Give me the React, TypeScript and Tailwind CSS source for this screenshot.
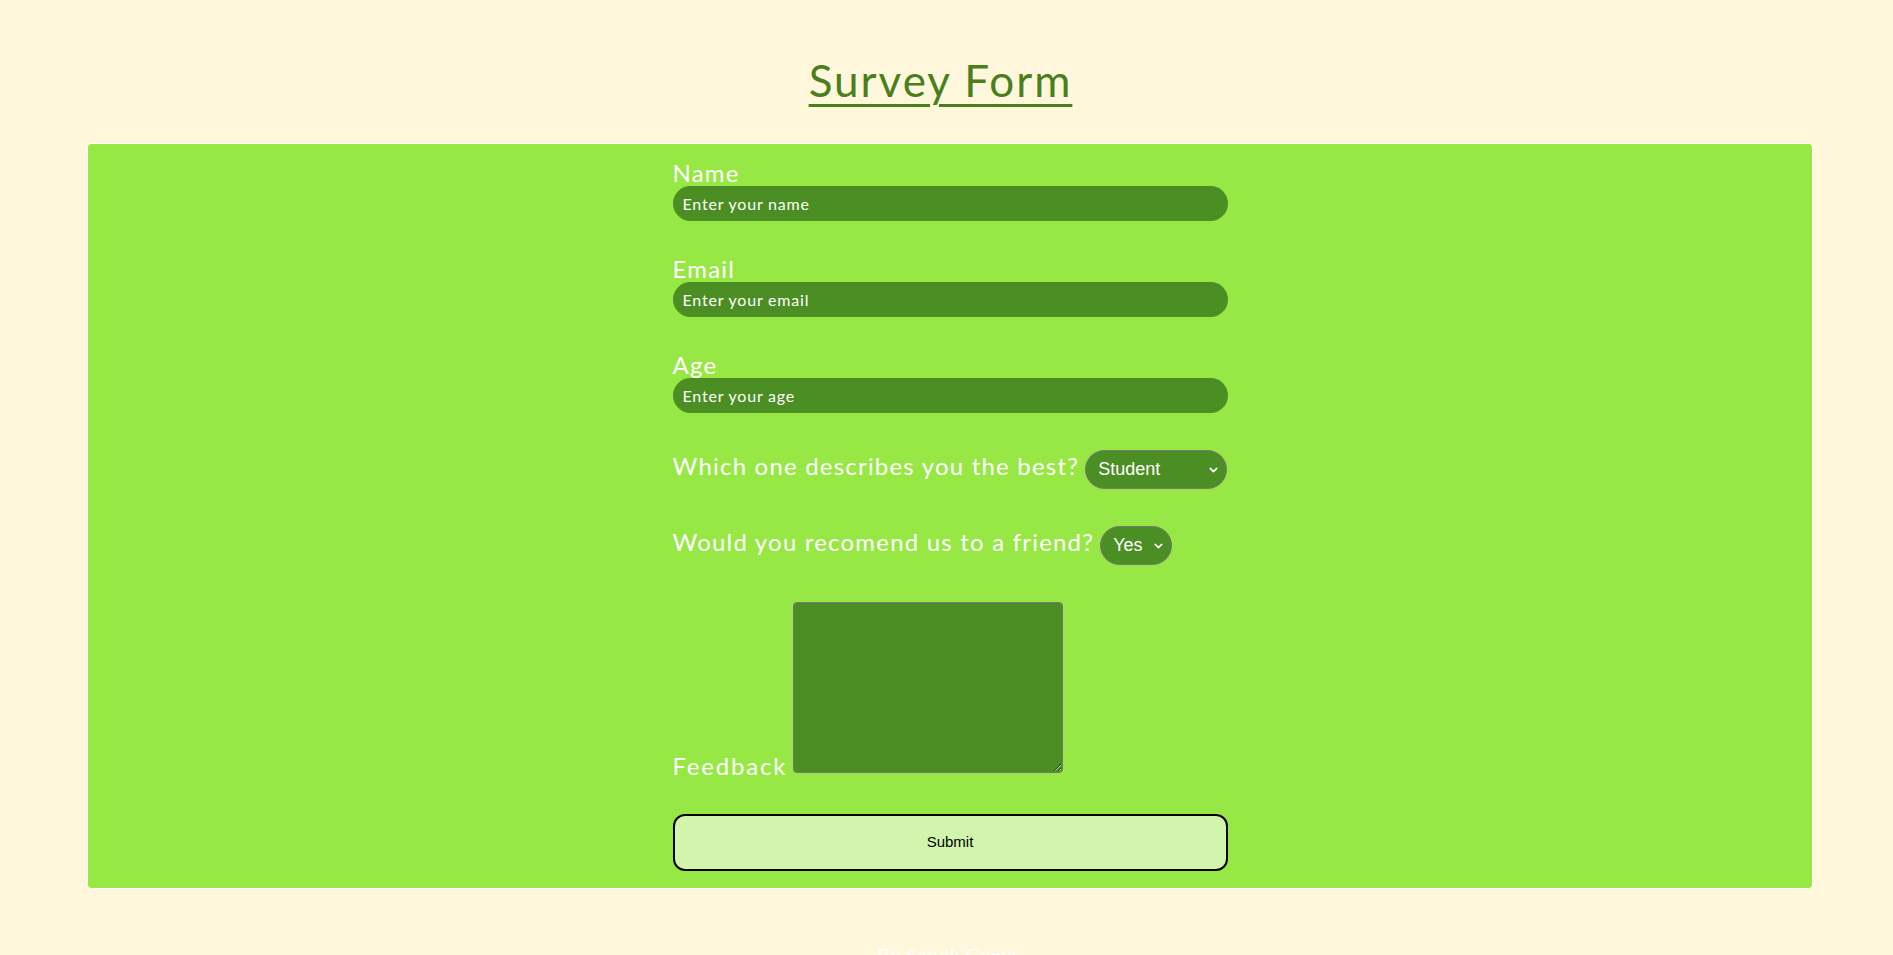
import { ChevronDown } from 'lucide-react';

const font = { fontFamily: 'Lato, "Noto Sans", sans-serif' };

const Field = ({ label, placeholder, type }: { label: string; placeholder: string; type: string }) => (
  <div className="flex flex-col">
    <label className="text-[24px] leading-[26px] tracking-[1.2px] text-white">{label}</label>
    <input
      type={type}
      placeholder={placeholder}
      className="h-[35px] w-full rounded-full bg-[#4b8e23] px-[10px] text-[16px] tracking-[0.8px] text-white outline-none placeholder:text-white"
    />
  </div>
);

const Select = ({ options, width }: { options: string[]; width: string }) => (
  <div className={`relative shrink-0 ${width}`}>
    <select
      className="h-[39px] w-full appearance-none rounded-full border border-[#767676] bg-[#4b8e23] pl-[12px] pr-6 text-[18px] text-white outline-none"
      style={{ fontFamily: '"Liberation Sans", Arial, sans-serif' }}
    >
      {options.map((o) => (
        <option key={o}>{o}</option>
      ))}
    </select>
    <ChevronDown className="pointer-events-none absolute right-[7px] top-1/2 h-[13px] w-[13px] -translate-y-1/2 text-white" strokeWidth={3} />
  </div>
);

export default function App() {
  return (
    <div className="min-h-screen bg-[#fff7dc] pb-10" style={font}>
      {/* Header */}
      <div className="flex justify-center pr-[12px] pt-[57px]">
        <h1 className="text-[44px] font-normal leading-[46px] tracking-[2px] text-[#4a7f1b] underline decoration-[3px] underline-offset-[7px]">
          Survey Form
        </h1>
      </div>

      {/* Card */}
      <div className="ml-[87px] mt-[40px] w-[1726px] rounded-[4px] border border-white bg-[#97e845] pb-[17px] pt-[16px]">
        <form className="mx-auto flex w-[555px] flex-col">
          <Field label="Name" placeholder="Enter your name" type="text" />
          <div className="mt-[35px]">
            <Field label="Email" placeholder="Enter your email" type="email" />
          </div>
          <div className="mt-[35px]">
            <Field label="Age" placeholder="Enter your age" type="number" />
          </div>

          <div className="mt-[37px] flex items-center gap-[6px] whitespace-nowrap">
            <span className="shrink-0 pb-[8px] text-[24px] leading-[26px] tracking-[1.2px] text-white">Which one describes you the best?</span>
            <Select options={['Student', 'Working Professional', 'Other']} width="w-[142px]" />
          </div>

          <div className="mt-[37px] flex items-center gap-[6px] whitespace-nowrap">
            <span className="shrink-0 pb-[8px] text-[24px] leading-[26px] tracking-[1.2px] text-white">Would you recomend us to a friend?</span>
            <Select options={['Yes', 'No', 'Maybe']} width="w-[72px]" />
          </div>

          <div className="mt-[37px] flex items-end gap-[6px]">
            <label className="-mb-[3px] text-[24px] leading-[20px] tracking-[1.8px] text-white">Feedback</label>
            <textarea className="h-[171px] w-[270px] rounded-[4px] border border-[#767676] bg-[#4b8e23] text-white outline-none" />
          </div>

          <button
            type="button"
            className="mt-[41px] h-[57px] w-full rounded-[12px] border-2 border-black bg-[#d1f5ac] text-[15px] text-black"
            style={{ fontFamily: '"Liberation Sans", Arial, sans-serif' }}
          >
            Submit
          </button>
        </form>
      </div>

      {/* Footer */}
      <p
        className="mt-[52px] text-center text-[21px] text-white"
        style={{ fontFamily: '"Liberation Serif", "Times New Roman", serif' }}
      >
        By Satvik Gupta
      </p>
    </div>
  );
}
